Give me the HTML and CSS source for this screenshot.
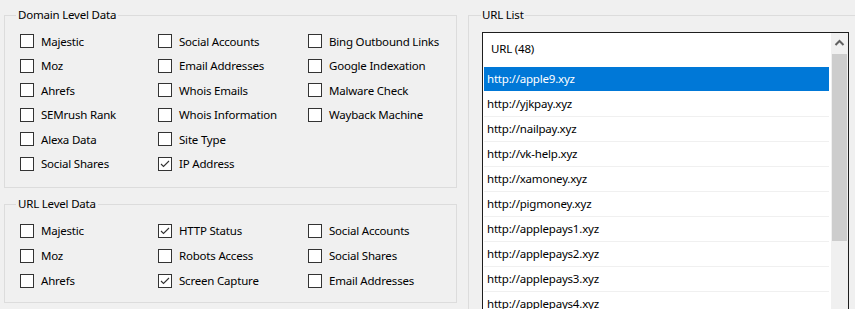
FILE: index.html
```html
<!DOCTYPE html>
<html lang="en">
  <head>
    <meta charset="UTF-8" />
    <meta name="viewport" content="width=device-width, initial-scale=1.0" />
    <title>Data options</title>
    <link rel="stylesheet" href="styles.css">
  </head>
  <body>
    <div class="window">
      <div class="left">
        <fieldset class="group domain">
          <legend>Domain Level Data</legend>
          <div class="grid">
            <label class="opt"><span class="box"></span>Majestic</label>
            <label class="opt"><span class="box"></span>Social Accounts</label>
            <label class="opt"><span class="box"></span>Bing Outbound Links</label>
            <label class="opt"><span class="box"></span>Moz</label>
            <label class="opt"><span class="box"></span>Email Addresses</label>
            <label class="opt"><span class="box"></span>Google Indexation</label>
            <label class="opt"><span class="box"></span>Ahrefs</label>
            <label class="opt"><span class="box"></span>Whois Emails</label>
            <label class="opt"><span class="box"></span>Malware Check</label>
            <label class="opt"><span class="box"></span>SEMrush Rank</label>
            <label class="opt"><span class="box"></span>Whois Information</label>
            <label class="opt"><span class="box"></span>Wayback Machine</label>
            <label class="opt"><span class="box"></span>Alexa Data</label>
            <label class="opt"><span class="box"></span>Site Type</label>
            <span></span>
            <label class="opt"><span class="box"></span>Social Shares</label>
            <label class="opt"><span class="box"><svg viewBox="0 0 14 14"><path d="M3 7 L5.5 9.5 L11 4" /></svg></span>IP Address</label>
            <span></span>
          </div>
        </fieldset>
        <fieldset class="group url">
          <legend>URL Level Data</legend>
          <div class="grid">
            <label class="opt"><span class="box"></span>Majestic</label>
            <label class="opt"><span class="box"><svg viewBox="0 0 14 14"><path d="M3 7 L5.5 9.5 L11 4" /></svg></span>HTTP Status</label>
            <label class="opt"><span class="box"></span>Social Accounts</label>
            <label class="opt"><span class="box"></span>Moz</label>
            <label class="opt"><span class="box"></span>Robots Access</label>
            <label class="opt"><span class="box"></span>Social Shares</label>
            <label class="opt"><span class="box"></span>Ahrefs</label>
            <label class="opt"><span class="box"><svg viewBox="0 0 14 14"><path d="M3 7 L5.5 9.5 L11 4" /></svg></span>Screen Capture</label>
            <label class="opt"><span class="box"></span>Email Addresses</label>
          </div>
        </fieldset>
      </div>
      <fieldset class="group list-group">
        <legend>URL List</legend>
        <div class="listbox">
          <div class="list">
            <div class="list-head">URL (48)</div>
            <div class="row selected">http://apple9.xyz</div>
            <div class="row">http://yjkpay.xyz</div>
            <div class="row">http://nailpay.xyz</div>
            <div class="row">http://vk-help.xyz</div>
            <div class="row">http://xamoney.xyz</div>
            <div class="row">http://pigmoney.xyz</div>
            <div class="row">http://applepays1.xyz</div>
            <div class="row">http://applepays2.xyz</div>
            <div class="row">http://applepays3.xyz</div>
            <div class="row">http://applepays4.xyz</div>
          </div>
          <div class="scrollbar">
            <div class="arrow">
              <svg viewBox="0 0 17 17"><path d="M4.5 10 L8.5 6 L12.5 10" /></svg>
            </div>
            <div class="thumb"></div>
          </div>
        </div>
      </fieldset>
    </div>
  </body>
</html>
```
FILE: styles.css
```css
html, body {
  margin: 0;
  height: 100%;
  overflow: hidden;
}
body {
  background: #f0f0f0;
  font-family: "Noto Sans", "Open Sans", sans-serif;
  font-size: 11.5px;
  letter-spacing: -0.2px;
  color: #000;
}
.window {
  display: flex;
  align-items: flex-start;
  padding-left: 4px;
  gap: 11px;
  height: 309px;
  overflow: hidden;
}
.left {
  width: 453px;
  flex: none;
  display: flex;
  flex-direction: column;
}
.group {
  margin: 7px 0 0 0;
  border: 1px solid #dcdcdc;
  padding: 6px 10px 11px 15px;
  min-width: 0;
}
.group legend {
  padding: 0 2px;
  margin-left: -4px;
  line-height: 16px;
  height: 16px;
}
.grid {
  display: grid;
  grid-template-columns: 138px 150px 1fr;
  grid-auto-rows: 24.5px;
}
.url {
  margin-top: 8px;
  padding-top: 6px;
  padding-bottom: 9px;
}
.url .grid {
  grid-auto-rows: 25px;
}
.opt {
  display: flex;
  align-items: center;
  gap: 7px;
  white-space: nowrap;
}
.box {
  width: 12px;
  height: 12px;
  border: 1px solid #333;
  background: #fff;
  flex: none;
  display: flex;
}
.box svg {
  width: 14px;
  height: 14px;
  margin: -1px 0 0 -1px;
  overflow: visible;
}
.box path {
  fill: none;
  stroke: #333;
  stroke-width: 1.1;
}
.list-group {
  width: 400px;
  flex: none;
  padding: 9px 0 0 13px;
  height: 400px;
}
.list-group legend {
  margin-left: -1px;
  padding: 0 1px;
}
.listbox {
  width: 365px;
  height: 300px;
  border: 1px solid #1e1e1e;
  background: #fff;
  display: flex;
}
.list {
  flex: 1;
  padding-left: 1px;
}
.list-head {
  height: 34px;
  line-height: 32px;
  padding-left: 7px;
}
.row {
  height: 24px;
  line-height: 24px;
  border-bottom: 1px solid #f0f0f0;
  padding-left: 3px;
  margin-right: 2px;
}
.row.selected {
  background: #0078d7;
  color: #fff;
  border-bottom-color: #fff;
}
.scrollbar {
  width: 17px;
  background: #f0f0f0;
  display: flex;
  flex-direction: column;
}
.arrow {
  height: 21px;
  display: flex;
  align-items: center;
  justify-content: center;
}
.arrow svg {
  width: 17px;
  height: 17px;
}
.arrow path {
  fill: none;
  stroke: #606060;
  stroke-width: 2;
}
.thumb {
  margin: 0 1px;
  height: 187px;
  background: #cdcdcd;
}
```
